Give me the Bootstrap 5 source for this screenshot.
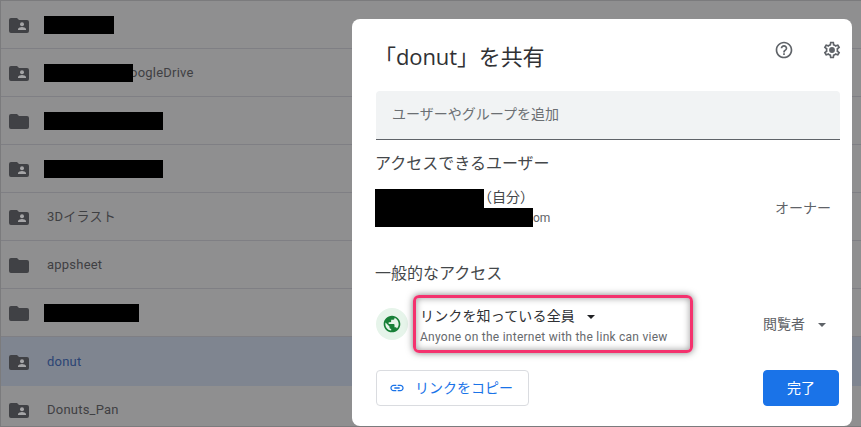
<!DOCTYPE html>
<html lang="ja">
<head>
<meta charset="utf-8">
<title>共有</title>
<link href="https://cdn.jsdelivr.net/npm/bootstrap@5.3.0/dist/css/bootstrap.min.css" rel="stylesheet">
<style>
html,body{margin:0;height:427px;overflow:hidden}
body{background:#8f8f90;font-family:Roboto,"Noto Sans CJK JP",sans-serif;color:#202124;position:relative}
.shell{width:861px;height:427px;border:1px solid #7b7b7d;border-right:0;overflow:hidden}
.frow{height:48px;border-bottom:1px solid #7f7f84;padding-left:8px;font-size:13px;color:#3f4043;font-weight:400;letter-spacing:.22px;flex:none}
.frow svg{width:20px;height:20px;flex:none}
.fname{margin-left:18px}
.fname-b{margin-left:15px}
.clip{margin-left:-3px}
.blk{background:#000;display:inline-block;height:18px;flex:none;position:relative;z-index:1}
.frow.sel{background:#7f8590;color:#2b4475;border-bottom:0;height:49px}
.frow.last{border-bottom:0}
.dlg{position:absolute;left:352px;top:19px;width:500px;height:407px;background:#fff;border-radius:8px;padding:0 12px 0 24px}
.dhead{height:72px;padding:19px 0 0 7px;align-items:flex-start}
.dtitle{font-size:22px;line-height:36px;color:#303134;margin:0;font-weight:400;font-family:"Open Sans","Noto Sans CJK JP",sans-serif;margin-left:-9px;letter-spacing:-.1px}
.ibar{position:absolute;right:10px;top:21px;gap:28px}
.ibar svg{width:20px;height:20px;fill:#5f6368}
.adder{height:49px;background:#f1f3f4;border-bottom:1px solid #5f6368;border-radius:4px 4px 0 0;padding:0 0 2px 16px;font-size:14px;color:#6b6f73;width:464px}
.sect{font-size:16px;line-height:24px;color:#44474a;margin:0 0 0 -1px;font-weight:400}
.s1{margin-top:12px}
.urow{width:456px;height:38px;margin-top:13px;position:relative;margin-left:-1px}
.uname{font-size:14px;line-height:19px;color:#44474a}
.paren{margin-left:-6px;position:relative;top:-1px}
.umail{font-size:12px;line-height:18px;color:#5f6368}
.b1{width:109px;height:19px}
.b2{width:158px;height:19px}
.role{font-size:14px;color:#5f6368}
.s2{margin-top:35px}
.grow{margin-top:8px;width:464px;height:60px}
.globe{width:32px;height:32px;border-radius:50%;background:#e6f4ea;flex:none;margin-top:-1px;margin-right:5px}
.globe svg{width:20px;height:20px}
.mark-box{width:280px;height:58px;border:3px solid #f4326e;border-radius:6px;padding:7px 0 0 4px;box-shadow:0 0 7px rgba(0,0,0,.5),inset 0 0 7px rgba(0,0,0,.4);flex:none}
.gt{font-size:14px;line-height:22px;color:#303134;letter-spacing:.15px}
.gs{font-size:12px;line-height:18px;color:#66696d;letter-spacing:.25px;white-space:nowrap;margin-top:1px}
.caret{width:0;height:0;border-left:4px solid transparent;border-right:4px solid transparent;border-top:4px solid #202124;display:inline-block;margin-left:12px;vertical-align:2px}
.vrole{font-size:14px;color:#5f6368;margin-right:14px}
.vrole .caret{border-top-color:#5f6368;margin-left:13px}
.foot{width:463px;margin-top:16px}
.btn.copy{width:153px;height:36px;padding:0 0 0 12px;font-size:14px;color:#1a73e8;border:1px solid #dadce0;background:#fff;border-radius:4px;gap:10px}
.copy svg{width:16px;height:16px;fill:#1a73e8;flex:none}
.btn.done{width:76px;height:36px;padding:0;font-size:14px;background:#1a73e8;border-color:#1a73e8;color:#fff;border-radius:4px}
</style>
</head>
<body>
<svg width="0" height="0" class="position-absolute">
<defs>
<symbol id="sf" viewBox="0 0 20 20"><path fill="#404145" d="M2 3h6l2 2h8a2 2 0 0 1 2 2v9a2 2 0 0 1-2 2H2a2 2 0 0 1-2-2V5a2 2 0 0 1 2-2z"/><circle cx="13" cy="9.2" r="2" fill="#a5a5a7"/><path fill="#a5a5a7" d="M9 15v-1c0-1.3 2.6-2 4-2s4 .7 4 2v1z"/></symbol>
<symbol id="pf" viewBox="0 0 20 20"><path fill="#404145" d="M2 3h6l2 2h8a2 2 0 0 1 2 2v9a2 2 0 0 1-2 2H2a2 2 0 0 1-2-2V5a2 2 0 0 1 2-2z"/></symbol>
</defs>
</svg>
<div class="shell d-flex flex-column">
  <div class="frow d-flex align-items-center"><svg><use href="#sf"/></svg><span class="blk fname-b" style="width:70px"></span></div>
  <div class="frow d-flex align-items-center"><svg><use href="#sf"/></svg><span class="blk fname-b" style="width:89px"></span><span class="clip">oogleDrive</span></div>
  <div class="frow d-flex align-items-center"><svg><use href="#pf"/></svg><span class="blk fname-b" style="width:119px"></span></div>
  <div class="frow d-flex align-items-center"><svg><use href="#sf"/></svg><span class="blk fname-b" style="width:119px"></span></div>
  <div class="frow d-flex align-items-center"><svg><use href="#sf"/></svg><span class="fname">3Dイラスト</span></div>
  <div class="frow d-flex align-items-center"><svg><use href="#pf"/></svg><span class="fname">appsheet</span></div>
  <div class="frow d-flex align-items-center"><svg><use href="#pf"/></svg><span class="blk fname-b" style="width:95px"></span></div>
  <div class="frow sel d-flex align-items-center"><svg><use href="#sf"/></svg><span class="fname">donut</span></div>
  <div class="frow last d-flex align-items-center"><svg><use href="#sf"/></svg><span class="fname">Donuts_Pan</span></div>
</div>
<div class="dlg">
  <div class="dhead d-flex"><h2 class="dtitle">「donut」を共有</h2></div>
  <div class="ibar d-flex">
    <svg viewBox="0 0 24 24"><path d="M11 18h2v-2h-2v2zm1-16C6.48 2 2 6.48 2 12s4.48 10 10 10 10-4.48 10-10S17.52 2 12 2zm0 18c-4.41 0-8-3.59-8-8s3.59-8 8-8 8 3.59 8 8-3.59 8-8 8zm0-14c-2.21 0-4 1.79-4 4h2c0-1.1.9-2 2-2s2 .9 2 2c0 2-3 1.75-3 5h2c0-2.25 3-2.5 3-5 0-2.21-1.79-4-4-4z"/></svg>
    <svg viewBox="0 0 24 24"><path d="M19.43 12.98c.04-.32.07-.64.07-.98s-.03-.66-.07-.98l2.11-1.65c.19-.15.24-.42.12-.64l-2-3.46c-.12-.22-.39-.3-.61-.22l-2.49 1c-.52-.4-1.08-.73-1.69-.98l-.38-2.65C14.46 2.18 14.25 2 14 2h-4c-.25 0-.46.18-.49.42l-.38 2.65c-.61.25-1.17.59-1.69.98l-2.49-1c-.23-.09-.49 0-.61.22l-2 3.46c-.13.22-.07.49.12.64l2.11 1.65c-.04.32-.07.65-.07.98s.03.66.07.98l-2.11 1.65c-.19.15-.24.42-.12.64l2 3.46c.12.22.39.3.61.22l2.49-1c.52.4 1.08.73 1.69.98l.38 2.65c.03.24.24.42.49.42h4c.25 0 .46-.18.49-.42l.38-2.65c.61-.25 1.17-.59 1.69-.98l2.49 1c.23.09.49 0 .61-.22l2-3.46c.12-.22.07-.49-.12-.64l-2.11-1.65zM17.45 11.27c.04.31.05.52.05.73 0 .21-.02.43-.05.73l-.14 1.13.89.7 1.08.84-.7 1.21-1.27-.51-1.04-.42-.9.68c-.43.32-.84.56-1.25.73l-1.06.43-.16 1.13-.2 1.35h-1.4l-.19-1.35-.16-1.13-1.06-.43c-.43-.18-.83-.41-1.23-.71l-.91-.7-1.06.43-1.27.51-.7-1.21 1.08-.84.89-.7-.14-1.13C6.52 12.43 6.5 12.2 6.5 12s.02-.43.05-.73l.14-1.13-.89-.7-1.08-.84.7-1.21 1.27.51 1.04.42.9-.68c.43-.32.84-.56 1.25-.73l1.06-.43.16-1.13.2-1.35h1.39l.19 1.35.16 1.13 1.06.43c.43.18.83.41 1.23.71l.91.7 1.06-.43 1.27-.51.7 1.21-1.07.85-.89.7.14 1.13z"/><circle cx="12" cy="12" r="3.5"/></svg>
  </div>
  <div class="adder d-flex align-items-center">ユーザーやグループを追加</div>
  <h3 class="sect s1">アクセスできるユーザー</h3>
  <div class="urow d-flex justify-content-between align-items-center">
    <div>
      <div class="uname d-flex align-items-center"><span class="blk b1"></span><span class="paren">（自分）</span></div>
      <div class="umail d-flex align-items-center"><span class="blk b2"></span><span>om</span></div>
    </div>
    <span class="role">オーナー</span>
  </div>
  <h3 class="sect s2">一般的なアクセス</h3>
  <div class="grow d-flex align-items-center justify-content-between">
    <div class="d-flex align-items-center">
      <div class="globe d-flex align-items-center justify-content-center">
        <svg viewBox="0 0 24 24"><path fill="#188038" d="M12 2C6.48 2 2 6.48 2 12s4.48 10 10 10 10-4.48 10-10S17.52 2 12 2zm-1 17.93C7.05 19.44 4 16.08 4 12c0-.62.08-1.21.21-1.79L9 15v1c0 1.1.9 2 2 2v1.93zm6.9-2.54c-.26-.81-1-1.39-1.9-1.39h-1v-3c0-.55-.45-1-1-1H8v-2h2c.55 0 1-.45 1-1V7h2c1.1 0 2-.9 2-2v-.41c2.93 1.19 5 4.06 5 7.41 0 2.08-.8 3.97-2.1 5.39z"/></svg>
      </div>
      <div class="mark-box">
        <div class="gt">リンクを知っている全員<span class="caret"></span></div>
        <div class="gs">Anyone on the internet with the link can view</div>
      </div>
    </div>
    <span class="vrole">閲覧者<span class="caret"></span></span>
  </div>
  <div class="foot d-flex justify-content-between">
    <button type="button" class="btn copy d-flex align-items-center">
      <svg viewBox="0 0 24 24"><path d="M3.9 12c0-1.71 1.39-3.1 3.1-3.1h4V7H7c-2.76 0-5 2.24-5 5s2.24 5 5 5h4v-1.9H7c-1.71 0-3.1-1.39-3.1-3.1zM8 13h8v-2H8v2zm9-6h-4v1.9h4c1.71 0 3.1 1.39 3.1 3.1s-1.39 3.1-3.1 3.1h-4V17h4c2.76 0 5-2.24 5-5s-2.24-5-5-5z"/></svg>
      リンクをコピー
    </button>
    <button type="button" class="btn btn-primary done">完了</button>
  </div>
</div>
<script src="https://cdn.jsdelivr.net/npm/bootstrap@5.3.0/dist/js/bootstrap.bundle.min.js"></script>
</body>
</html>
